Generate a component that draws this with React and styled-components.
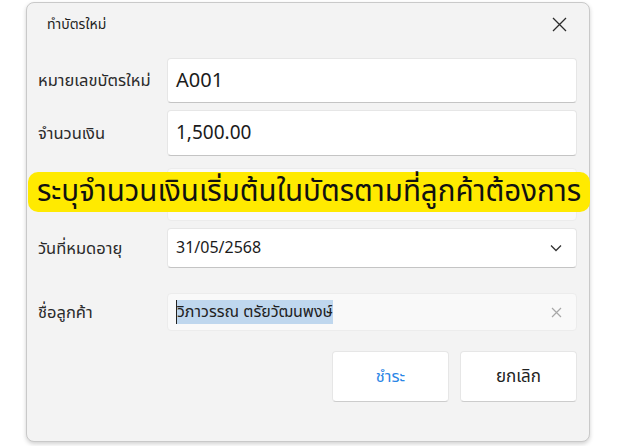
import React from "react";
import styled, { createGlobalStyle } from "styled-components";

const Global = createGlobalStyle`
  html, body { margin: 0; padding: 0; background: #ffffff; }
  body { font-family: "Noto Sans Thai", "Noto Sans", "Liberation Sans", sans-serif; }
  * { box-sizing: border-box; }
`;

const Page = styled.div`
  position: relative;
  width: 619px;
  height: 446px;
  padding: 2px 29px 0 26px;
`;

const Dialog = styled.div`
  width: 564px;
  height: 440px;
  background: #f3f3f3;
  border: 1px solid #c9c9c9;
  border-radius: 8px;
  box-shadow: 0 2px 4px rgba(0, 0, 0, 0.18);
  display: flex;
  flex-direction: column;
`;

const Header = styled.div`
  height: 42px;
  display: flex;
  align-items: center;
  justify-content: space-between;
  padding: 0 22px 0 20px;
`;

const Title = styled.span`
  font-size: 14px;
  color: #1f1f1f;
`;

const CloseBtn = styled.button`
  border: 0;
  background: transparent;
  padding: 0;
  width: 16px;
  height: 16px;
  display: flex;
  align-items: center;
  justify-content: center;
  cursor: pointer;
`;

const Form = styled.div`
  display: flex;
  flex-direction: column;
  padding: 13px 12px 0 11px;
`;

const Row = styled.div`
  display: grid;
  grid-template-columns: 129px 410px;
  align-items: center;
  margin-top: ${(p) => p.$mt || 0}px;
`;

const Label = styled.span`
  font-size: 16.5px;
  color: #2a2a2a;
  white-space: nowrap;
`;

const Field = styled.div`
  height: ${(p) => p.$h}px;
  background: ${(p) => (p.$muted ? "#f9f9f9" : "#ffffff")};
  border: 1px solid ${(p) => (p.$muted ? "#ececec" : "#e6e6e6")};
  border-bottom-color: ${(p) => (p.$muted ? "#ececec" : "#c4c4c4")};
  border-radius: 4px;
  display: flex;
  align-items: center;
  justify-content: space-between;
  padding: 0 14px 0 8px;
`;

const Value = styled.span`
  font-size: ${(p) => p.$size}px;
  color: #1b1b1b;
  display: flex;
  align-items: center;
`;

const Selected = styled.span`
  background: #bfd7ee;
  color: #222;
  border-left: 1px solid #222;
  line-height: 24px;
`;

const Buttons = styled.div`
  display: flex;
  justify-content: flex-end;
  gap: 11px;
  margin-top: 20px;
`;

const Button = styled.button`
  width: 117px;
  height: 51px;
  background: #ffffff;
  border: 1px solid #e6e6e6;
  border-bottom-color: #cccccc;
  border-radius: 4px;
  font-family: inherit;
  font-size: ${(p) => (p.$primary ? 16.5 : 17)}px;
  color: ${(p) => (p.$primary ? "#2b86e6" : "#222222")};
  cursor: pointer;
`;

const Banner = styled.div`
  position: absolute;
  left: 28px;
  top: 172px;
  width: 562px;
  height: 40px;
  background: #ffea00;
  border-radius: 10px;
  display: flex;
  align-items: center;
  justify-content: center;
  font-size: 29.5px;
  line-height: 40px;
  color: #111;
  white-space: nowrap;
`;

const Chevron = () => (
  <svg width="12" height="8" viewBox="0 0 12 8">
    <path d="M1 1.5 L6 6.5 L11 1.5" fill="none" stroke="#333" strokeWidth="1.3" />
  </svg>
);

const SmallX = () => (
  <svg width="11" height="11" viewBox="0 0 11 11">
    <path d="M1 1 L10 10 M10 1 L1 10" fill="none" stroke="#a8a8a8" strokeWidth="1.2" />
  </svg>
);

const BigX = () => (
  <svg width="15" height="15" viewBox="0 0 15 15">
    <path d="M1 1 L14 14 M14 1 L1 14" fill="none" stroke="#2b2b2b" strokeWidth="1.3" />
  </svg>
);

export default function App() {
  return (
    <>
      <Global />
      <Page>
        <Dialog>
          <Header>
            <Title>ทำบัตรใหม่</Title>
            <CloseBtn aria-label="close">
              <BigX />
            </CloseBtn>
          </Header>
          <Form>
            <Row>
              <Label>หมายเลขบัตรใหม่</Label>
              <Field $h={45}>
                <Value $size={20}>A001</Value>
              </Field>
            </Row>
            <Row $mt={7}>
              <Label>จำนวนเงิน</Label>
              <Field $h={46}>
                <Value $size={19}>1,500.00</Value>
              </Field>
            </Row>
            <Row $mt={12}>
              <Label />
              <Field $h={53} $muted />
            </Row>
            <Row $mt={7}>
              <Label>วันที่หมดอายุ</Label>
              <Field $h={40}>
                <Value $size={16}>31/05/2568</Value>
                <Chevron />
              </Field>
            </Row>
            <Row $mt={25}>
              <Label>ชื่อลูกค้า</Label>
              <Field $h={38} $muted>
                <Value $size={16}>
                  <Selected>วิภาวรรณ ตรัยวัฒนพงษ์</Selected>
                </Value>
                <SmallX />
              </Field>
            </Row>
            <Buttons>
              <Button $primary>ชำระ</Button>
              <Button>ยกเลิก</Button>
            </Buttons>
          </Form>
        </Dialog>
        <Banner>ระบุจำนวนเงินเริ่มต้นในบัตรตามที่ลูกค้าต้องการ</Banner>
      </Page>
    </>
  );
}
